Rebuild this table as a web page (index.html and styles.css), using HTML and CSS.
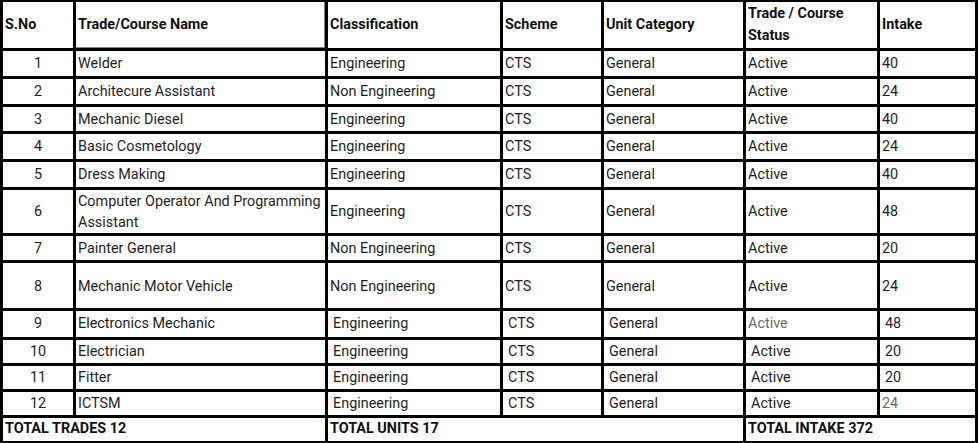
FILE: index.html
```html
<!DOCTYPE html>
<html lang="en">
<head>
<meta charset="utf-8">
<title>Trades</title>
<link rel="stylesheet" href="styles.css">
</head>
<body>
<div class="sheet">
  <div class="c h">S.No</div>
  <div class="c h sel">Trade/Course Name</div>
  <div class="c h">Classification</div>
  <div class="c h">Scheme</div>
  <div class="c h">Unit Category</div>
  <div class="c h">Trade / Course Status</div>
  <div class="c h">Intake</div>

  <div class="c n">1</div><div class="c">Welder</div><div class="c">Engineering</div><div class="c">CTS</div><div class="c">General</div><div class="c">Active</div><div class="c">40</div>
  <div class="c n">2</div><div class="c">Architecure Assistant</div><div class="c">Non Engineering</div><div class="c">CTS</div><div class="c">General</div><div class="c">Active</div><div class="c">24</div>
  <div class="c n">3</div><div class="c">Mechanic Diesel</div><div class="c">Engineering</div><div class="c">CTS</div><div class="c">General</div><div class="c">Active</div><div class="c">40</div>
  <div class="c n">4</div><div class="c">Basic Cosmetology</div><div class="c">Engineering</div><div class="c">CTS</div><div class="c">General</div><div class="c">Active</div><div class="c">24</div>
  <div class="c n">5</div><div class="c">Dress Making</div><div class="c">Engineering</div><div class="c">CTS</div><div class="c">General</div><div class="c">Active</div><div class="c">40</div>
  <div class="c n">6</div><div class="c">Computer Operator And Programming Assistant</div><div class="c">Engineering</div><div class="c">CTS</div><div class="c">General</div><div class="c">Active</div><div class="c">48</div>
  <div class="c n">7</div><div class="c">Painter General</div><div class="c">Non Engineering</div><div class="c">CTS</div><div class="c">General</div><div class="c">Active</div><div class="c">20</div>
  <div class="c n lo">8</div><div class="c lo">Mechanic Motor Vehicle</div><div class="c lo">Non Engineering</div><div class="c lo">CTS</div><div class="c lo">General</div><div class="c lo">Active</div><div class="c lo">24</div>
  <div class="c n up">9</div><div class="c up">Electronics Mechanic</div><div class="c p">Engineering</div><div class="c p">CTS</div><div class="c p">General</div><div class="c g up">Active</div><div class="c p">48</div>
  <div class="c n up">10</div><div class="c up">Electrician</div><div class="c p">Engineering</div><div class="c p">CTS</div><div class="c p">General</div><div class="c p">Active</div><div class="c p">20</div>
  <div class="c n up">11</div><div class="c up">Fitter</div><div class="c p">Engineering</div><div class="c p">CTS</div><div class="c p">General</div><div class="c p">Active</div><div class="c p">20</div>
  <div class="c n up">12</div><div class="c up">ICTSM</div><div class="c p">Engineering</div><div class="c p">CTS</div><div class="c p">General</div><div class="c p">Active</div><div class="c g up">24</div>

  <div class="c h span2">TOTAL TRADES 12</div>
  <div class="c h span3">TOTAL UNITS 17</div>
  <div class="c h span2">TOTAL INTAKE 372</div>
</div>
</body>
</html>
```
FILE: styles.css
```css
html, body {
  margin: 0;
  padding: 0;
  background: #fff;
}

.sheet {
  display: grid;
  grid-template-columns: 70px 249px 172px 98px 139px 131px 95px;
  grid-template-rows: 46px 25px 25px 24px 25px 25px 43px 24px 45px 26px 23px 23px 23px 23px;
  gap: 3px;
  padding: 2px 3px 3px 3px;
  width: max-content;
  background: #000;
  font-family: Roboto, "Noto Sans", sans-serif;
  font-size: 14.4px;
  color: #1e1e1e;
}

.c {
  background: #fff;
  display: flex;
  align-items: center;
  padding: 0 2px;
  line-height: 21px;
  overflow: hidden;
}

.h {
  font-weight: 700;
  color: #111;
  line-height: 22px;
  padding-bottom: 1px;
}

.n {
  justify-content: center;
}

.p {
  padding-left: 5px;
  padding-bottom: 1px;
}

.up {
  padding-bottom: 1px;
}

.lo {
  padding-top: 2px;
}

.g {
  color: #6b6b6b;
}

.sel {
  position: relative;
}

.sel::after {
  content: "";
  position: absolute;
  top: -2px;
  left: 0;
  right: -2px;
  bottom: -2px;
  border: 3px solid #7f7f7f;
  border-left: none;
  border-top-width: 2px;
}

.span2 {
  grid-column: span 2;
}

.span3 {
  grid-column: span 3;
}
```
